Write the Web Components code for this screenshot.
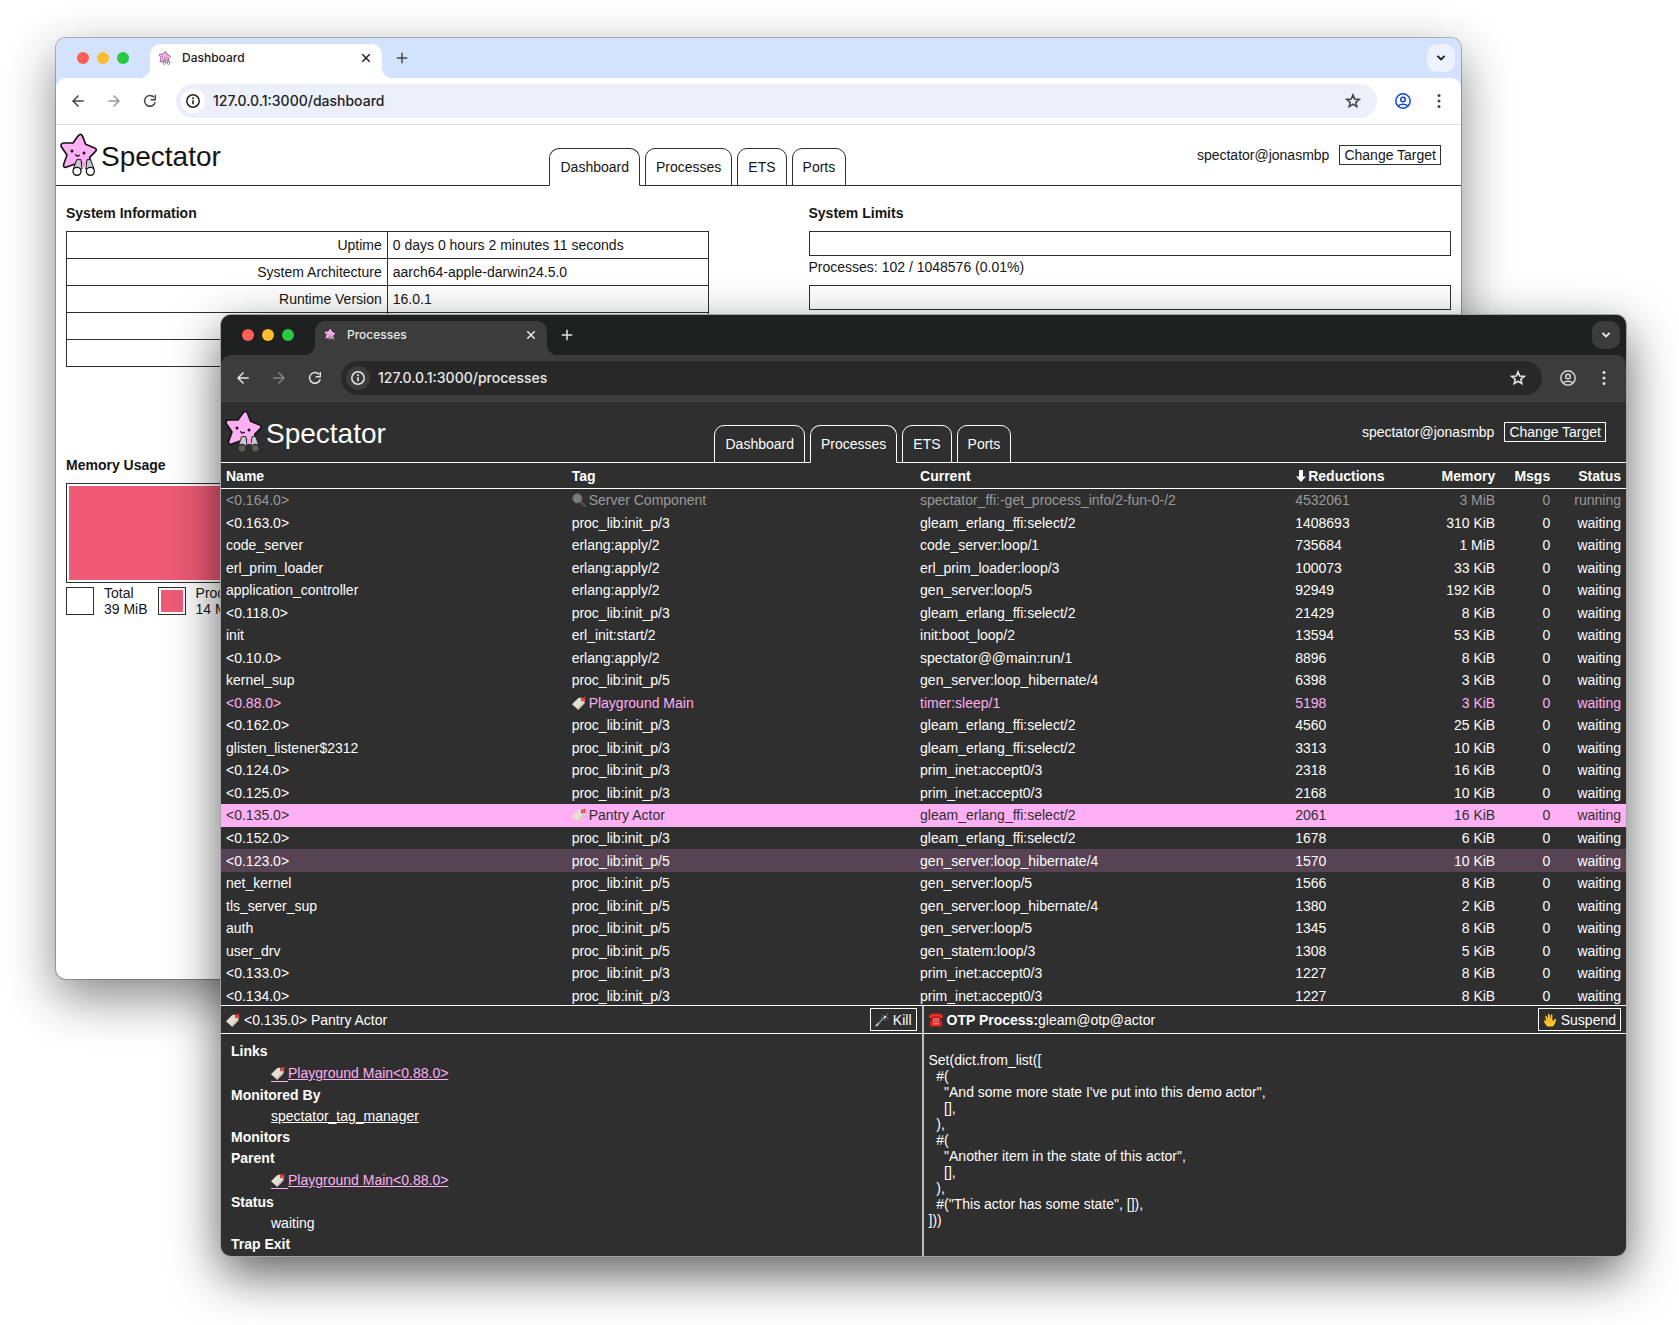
<!DOCTYPE html>
<html lang="en">
<head>
<meta charset="utf-8">
<title>Spectator</title>
<style>
  html, body { margin: 0; height: 100%; background: #fff; }
  body { font-family: "Liberation Sans", Arial, sans-serif; font-size: 14px; line-height: 16px; }
</style>
</head>
<body>
<desk-top>
  <browser-window theme="light" tab-title="Dashboard" url="127.0.0.1:3000/dashboard">
    <spectator-header current="Dashboard"></spectator-header>
    <dashboard-page></dashboard-page>
  </browser-window>
  <browser-window theme="dark" tab-title="Processes" url="127.0.0.1:3000/processes">
    <spectator-header current="Processes"></spectator-header>
    <process-table></process-table>
    <detail-split>
      <process-details slot="left"></process-details>
      <otp-details slot="right"></otp-details>
    </detail-split>
  </browser-window>
</desk-top>

<script>
const define = (name, html, setup) => {
  const template = document.createElement('template');
  template.innerHTML = html;
  customElements.define(name, class extends HTMLElement {
    connectedCallback() {
      if (this.shadowRoot) return;
      this.attachShadow({ mode: 'open' }).append(template.content.cloneNode(true));
      if (setup) setup(this, this.shadowRoot);
    }
  });
};

/* ---------- icons ---------- */
const line = (d, w = 1.6) => `<path d="${d}" fill="none" stroke="currentColor" stroke-width="${w}" stroke-linecap="square" stroke-linejoin="miter"/>`;
const ICONS = {
  back: ['0 0 16 16', line('M13 8H3.5M8 3L3 8l5 5', 1.5)],
  forward: ['0 0 16 16', line('M3 8h9.500M8 3l5 5-5 5', 1.5)],
  reload: ['0 0 16 16', `<path d="M13.200 9.200A5.400 5.400 0 1 1 12 4.300" fill="none" stroke="currentColor" stroke-width="1.5"/><path d="M13.300 2v4.700H8.600" fill="none" stroke="currentColor" stroke-width="1.5"/>`],
  info: ['0 0 16 16', `<circle cx="8" cy="8" r="6.200" fill="none" stroke="currentColor" stroke-width="1.5"/><path d="M8 7.200V11.300" stroke="currentColor" stroke-width="1.6"/><circle cx="8" cy="5.200" r="1" fill="currentColor"/>`],
  star: ['0 0 16 16', `<path d="M8 1.900L9.700 6l4.500.4-3.400 2.900 1 4.300L8 11.300l-3.800 2.300 1-4.300L1.800 6.400 6.300 6z" fill="none" stroke="currentColor" stroke-width="1.6"/>`],
  user: ['0 0 16 16', `<circle cx="8" cy="8" r="7.200" fill="none" stroke="currentColor" stroke-width="1.5"/><circle cx="8" cy="6.500" r="2.300" fill="none" stroke="currentColor" stroke-width="1.5"/><path d="M3.300 12.900C5.300 10.700 10.700 10.700 12.700 12.900" fill="none" stroke="currentColor" stroke-width="1.5"/>`],
  dots: ['0 0 16 16', `<g fill="currentColor"><circle cx="8" cy="2.500" r="1.500"/><circle cx="8" cy="8" r="1.500"/><circle cx="8" cy="13.500" r="1.500"/></g>`],
  close: ['0 0 16 16', line('M4.800 4.800l6.400 6.400M11.200 4.800l-6.400 6.400', 1.5)],
  plus: ['0 0 16 16', line('M8 3.500v9M3.500 8h9', 1.5)],
  chevron: ['0 0 16 16', line('M5 6.500l3 3 3-3', 1.8)],
  sort: ['0 0 10 14', `<path d="M3 1h4v6.500h3L5 13 0 7.500h3z" fill="currentColor"/>`],
  search: ['0 0 14 14', `<path d="M8.600 8.600L13 13" stroke="#555" stroke-width="2" stroke-linecap="round"/><circle cx="5.400" cy="5.400" r="4.600" fill="#7d7d7d" stroke="#686868"/>`],
  tag: ['0 0 14 14', `<path d="M8.300 1.500L12.800 4.200 12.400 7.400 6.200 13.800 0 8.300 6 2.300z" fill="#e6dfd4"/><path d="M12.400 7.400L6.200 13.800 5 12.700 11.500 5.900z" fill="#cfc6b8"/><circle cx="10" cy="4.300" r="1" fill="#6a2b25"/><path d="M9.700 4.600C9 2 10.500.8 11.300 2.600M10 4.400C12.500 5.400 14 3.600 11.800 3L13.300.800" fill="none" stroke="#ec3b34" stroke-width="1.200"/>`],
  wand: ['0 0 14 14', `<path d="M.8 13.200L3.800 10.200" stroke="#c3d0da" stroke-width="1.800"/><path d="M3.800 10.200L9.800 4.200" stroke="#7b838c" stroke-width="1.800"/><path d="M9.300 4.700L11 3" stroke="#dfe9f2" stroke-width="2"/><path d="M7.500 1.500l.5 1.500M12.500.500l-.5 1.500M13.500 5.500l-1.500-.5M6 4.500h1.500M10.500 7.500l-.5-1.500" stroke="#7b9bb8" stroke-width=".9"/>`],
  phone: ['0 0 14 14', `<path d="M.2 5V3C.5 1.200 3.500.500 7 .5s6.500.7 6.800 2.500V5H10.300V3.800H3.700V5z" fill="#f5281e"/><path d="M3.200 4.300h7.600L13.200 10v3.500H.8V10z" fill="#e01d17"/><g fill="#f7c9c4"><path d="M4.200 5.500h1.200v6H4.200zM6.400 5.500h1.200v6H6.400zM8.600 5.500h1.200v6H8.600z"/></g><path d="M3.500 7.500h7M3.500 9.500h7" stroke="#e01d17" stroke-width=".8"/>`],
  hand: ['0 0 14 14', `<path d="M4.500 13.500C2.800 12 1.200 9.500.8 7.500c.9-.8 1.800.1 2.400 1.300L2.300 3.200c.8-.9 1.500-.3 1.700.6L5 6.500 5 1.200c.7-.8 1.500-.4 1.600.4L7.200 6.200 8 1.500c.8-.7 1.500-.2 1.400.6L9.300 7 10.700 8c.4-1.500 1.300-2.500 2.500-2C12.300 8.500 12.500 11.500 9.500 13.500z" fill="#ffc62c"/><path d="M5 6.500v1.500M7.200 6.200v1.500M9.200 7v1M4.200 10c2-1.500 4-1.300 5.500.5" stroke="#d98b10" stroke-width=".6" fill="none"/>`],
  logo: ['0 0 114 132', `
    <path d="M62 4Q66 4 68 11L77 34 104 45Q113 49 106 56L89 73 93 96Q92 103 85 99L60 88 18 103Q9 104 11 94L21 66 4 41Q1 31 11 30L39 30 54 9Q58 4 62 4Z" fill="#ffaff3" stroke="#151515" stroke-width="5" stroke-linejoin="round"/>
    <circle cx="36" cy="54" r="4.500" fill="#151515"/><circle cx="72" cy="60" r="4.500" fill="#151515"/>
    <path d="M47 65Q52 73 58 67" fill="none" stroke="#151515" stroke-width="4" stroke-linecap="round"/>
    <g stroke="var(--lens-line)" stroke-width="3" stroke-linejoin="round"><path d="M50 80h13l3 28H40z" fill="#c9c9c9"/><path d="M81 80h11l10 28H77z" fill="#c9c9c9"/></g>
    <path d="M66 88h12v14H66z" fill="#f79be8"/>
    <circle cx="51" cy="115" r="12" fill="var(--lens)" stroke="var(--lens-line)" stroke-width="4"/><circle cx="91" cy="115" r="12" fill="var(--lens)" stroke="var(--lens-line)" stroke-width="4"/>`]
};
define('ui-icon', `<style>
  :host { display: inline-flex; width: 14px; height: 14px; flex: none; }
  svg { width: 100%; height: 100%; display: block; }
</style>`, (host, root) => {
  const [box, body] = ICONS[host.getAttribute('name')];
  root.append(document.createRange().createContextualFragment(`<svg viewBox="${box}" aria-hidden="true">${body}</svg>`));
});

/* ---------- free canvas holding the windows ---------- */
define('desk-top', `<style>
  :host { display: block; position: relative; height: 100vh; overflow: hidden; }
  ::slotted(browser-window) { position: absolute; inset: 38px 218px 346px 56px; }
  ::slotted(browser-window:last-of-type) { inset: 315px 53px 69px 221px; }
</style><slot></slot>`);

/* ---------- browser chrome ---------- */
define('browser-window', `<style>
  :host {
    --strip: #d3e3fd; --bar: #fff; --field: #ecf0fa; --chip: #fff; --rule: #dfe1e5; --menu: #ecf2fe;
    --ui: #1f2023; --ui-soft: #474747; --dim: #9b9b9b; --accent: #0b49c8; --page: #fff; --ink: #151515; --edge: #2f2f2f;
    --lens: #fff; --lens-line: #151515;
    display: flex; flex-direction: column; overflow: hidden; border-radius: 10px; background: var(--page); color: var(--ink);
    box-shadow: 0 0 0 1px rgba(0,0,0,.26), 0 18px 50px rgba(0,0,0,.48);
  }
  :host([theme="dark"]) {
    --strip: #1f2120; --bar: #3c3c3c; --field: #282828; --chip: #3c3c3c; --rule: #474747; --menu: #3c3c3c;
    --ui: #e9e9e9; --ui-soft: #e3e3e3; --dim: #858585; --accent: #d5d5d5; --page: #2f2f2f; --ink: #fefefe; --edge: #fefefe;
    --lens: #5e5d58; --lens-line: #2a2a2a;
    box-shadow: 0 0 0 1px #a4a4a4, 0 18px 50px rgba(0,0,0,.64);
  }
  * { box-sizing: border-box; }
  button { border: 0; padding: 0; background: none; color: inherit; font: inherit; display: grid; place-items: center; }
  .strip { display: flex; align-items: center; height: 40px; padding: 0 6px 0 21px; background: var(--strip); color: var(--ui-soft); flex: none; }
  .lights { display: flex; gap: 8px; margin-right: 21px; }
  .lights i { width: 12px; height: 12px; border-radius: 50%; background: #ff5f57; }
  .lights i + i { background: #febc2e; }
  .lights i + i + i { background: #28c840; }
  .tab { position: relative; align-self: end; display: flex; align-items: center; width: 232px; height: 34px; padding: 0 8px 6px; gap: 10px;
    border-radius: 10px 10px 0 0; background: var(--bar); color: var(--ui); font: 500 12px/16px Inter, sans-serif; }
  .tab span { flex: 1; }
  .tab::before, .tab::after { content: ""; position: absolute; bottom: 0; width: 10px; height: 10px; }
  .tab::before { right: 100%; background: radial-gradient(circle at 0 0, transparent 10px, var(--bar) 10px); }
  .tab::after { left: 100%; background: radial-gradient(circle at 100% 0, transparent 10px, var(--bar) 10px); }
  .tab ui-icon { width: 14px; height: 14px; }
  .tab button ui-icon { width: 16px; height: 16px; }
  .new { margin: 0 auto 0 12px; }
  .new ui-icon, .menu ui-icon { width: 16px; height: 16px; }
  .menu { width: 28px; height: 28px; border-radius: 10px; background: var(--menu); color: var(--ui); }
  .under { background: var(--strip); flex: none; }
  .bar { display: flex; align-items: center; padding: 6px 14px; gap: 20px; background: var(--bar); border-radius: 10px 10px 0 0; border-bottom: 1px solid var(--rule); color: var(--ui-soft); }
  .bar ui-icon { width: 16px; height: 16px; }
  .bar > .fwd { color: var(--dim); }
  .field { flex: 1; display: flex; align-items: center; gap: 8px; height: 34px; margin: 0 -2px; padding: 0 16px 0 5px; border-radius: 17px; background: var(--field); }
  .field .chip { width: 24px; height: 24px; border-radius: 50%; background: var(--chip); color: var(--ui); }
  input { flex: 1; min-width: 0; border: 0; padding: 0; background: none; color: var(--ui); font: 500 14px/20px Inter, sans-serif; }
  .user { color: var(--accent); }
  main { flex: 1; min-height: 0; display: flex; flex-direction: column; }
</style>
<div class="strip">
  <div class="lights"><i></i><i></i><i></i></div>
  <div class="tab"><ui-icon name="logo"></ui-icon><span></span><button aria-label="Close tab"><ui-icon name="close"></ui-icon></button></div>
  <button class="new" aria-label="New tab"><ui-icon name="plus"></ui-icon></button>
  <button class="menu" aria-label="Search tabs"><ui-icon name="chevron"></ui-icon></button>
</div>
<div class="under"><div class="bar">
  <button aria-label="Back"><ui-icon name="back"></ui-icon></button>
  <button class="fwd" aria-label="Forward"><ui-icon name="forward"></ui-icon></button>
  <button aria-label="Reload"><ui-icon name="reload"></ui-icon></button>
  <div class="field"><button class="chip" aria-label="Site information"><ui-icon name="info"></ui-icon></button><input type="text" aria-label="Address"><button aria-label="Bookmark"><ui-icon name="star"></ui-icon></button></div>
  <button class="user" aria-label="Profile"><ui-icon name="user"></ui-icon></button>
  <button aria-label="More"><ui-icon name="dots"></ui-icon></button>
</div></div>
<main><slot></slot></main>`, (host, root) => {
  root.querySelector('.tab span').textContent = host.getAttribute('tab-title');
  root.querySelector('input').setAttribute('value', host.getAttribute('url'));
});

/* ---------- application header ---------- */
define('spectator-header', `<style>
  :host { display: flex; justify-content: space-between; align-items: center; height: 60px; flex: none; padding: 0 20px 0 4px; border-bottom: 1px solid var(--edge); }
  .brand { display: flex; align-items: end; gap: 3px; font-size: 28px; line-height: 40px; }
  .brand ui-icon { width: 38px; height: 44px; }
  nav { display: flex; align-self: end; gap: 5px; margin-bottom: -1px; }
  a { box-sizing: border-box; height: 38px; padding: 10px 10px 0; border: 1px solid var(--edge); border-radius: 10px 10px 0 0; color: inherit; text-decoration: none; }
  a[aria-current] { border-bottom-color: var(--page); }
  .target { display: flex; align-items: center; gap: 10px; padding-left: 22px; }
  button { font: inherit; color: inherit; background: none; border: 1px solid var(--edge); padding: 1px 4px; }
</style>
<div class="brand"><ui-icon name="logo"></ui-icon><span>Spectator</span></div>
<nav><a href="#dashboard">Dashboard</a><a href="#processes">Processes</a><a href="#ets">ETS</a><a href="#ports">Ports</a></nav>
<div class="target"><span>spectator@jonasmbp</span><button>Change Target</button></div>`, (host, root) => {
  for (const a of root.querySelectorAll('a'))
    if (a.textContent === host.getAttribute('current')) a.setAttribute('aria-current', 'page');
});

/* ---------- dashboard ---------- */
define('limit-bar', `<style>
  :host { display: block; }
  .track { box-sizing: border-box; height: 25px; border: 1px solid var(--edge); }
  .label { height: 29px; line-height: 22px; }
</style><div class="track"></div><div class="label"><slot></slot></div>`);

define('legend-item', `<style>
  :host { display: flex; align-items: center; gap: 10px; }
  i { box-sizing: border-box; width: 28px; height: 28px; padding: 2px; border: 1px solid var(--edge); background: var(--swatch, #fff) content-box; }
</style><i></i><div><slot></slot></div>`);

define('dashboard-page', `<style>
  :host { display: block; padding: 19px 10px 0; }
  .cols { display: grid; grid-template-columns: 1fr 1fr; gap: 100px; }
  h2 { margin: 0 0 10px; font-size: 14px; line-height: 16px; }
  table { width: 100%; border-collapse: collapse; table-layout: fixed; }
  th, td { height: 26px; padding: 0 5px; border: 1px solid var(--edge); font-weight: 400; text-align: left; }
  th { text-align: right; }
  .memory { margin-top: 90px; }
  .graph { box-sizing: border-box; height: 100px; padding: 2px; border: 1px solid var(--edge); display: flex; margin-bottom: 2px; }
  .graph i { width: 36%; background: #ef5b76; }
  .legend { display: flex; gap: 10px; }
  .proc { --swatch: #ef5b76; }
</style>
<div class="cols">
  <section><h2>System Information</h2>
    <table>
      <tr><th scope="row">Uptime</th><td>0 days 0 hours 2 minutes 11 seconds</td></tr>
      <tr><th scope="row">System Architecture</th><td>aarch64-apple-darwin24.5.0</td></tr>
      <tr><th scope="row">Runtime Version</th><td>16.0.1</td></tr>
      <tr><th scope="row"></th><td></td></tr>
      <tr><th scope="row"></th><td></td></tr>
    </table>
  </section>
  <section><h2>System Limits</h2>
    <limit-bar>Processes: 102 / 1048576 (0.01%)</limit-bar>
    <limit-bar></limit-bar>
  </section>
</div>
<section class="memory"><h2>Memory Usage</h2>
  <div class="graph"><i></i></div>
  <div class="legend"><legend-item>Total<br>39 MiB</legend-item><legend-item class="proc">Processes<br>14 MiB</legend-item></div>
</section>`);

/* ---------- process list ---------- */
const ROWS = [
  ['<0.164.0>', 'Server Component', 'spectator_ffi:-get_process_info/2-fun-0-/2', '4532061', '3 MiB', 'running', 'muted', 'search'],
  ['<0.163.0>', 'proc_lib:init_p/3', 'gleam_erlang_ffi:select/2', '1408693', '310 KiB'],
  ['code_server', 'erlang:apply/2', 'code_server:loop/1', '735684', '1 MiB'],
  ['erl_prim_loader', 'erlang:apply/2', 'erl_prim_loader:loop/3', '100073', '33 KiB'],
  ['application_controller', 'erlang:apply/2', 'gen_server:loop/5', '92949', '192 KiB'],
  ['<0.118.0>', 'proc_lib:init_p/3', 'gleam_erlang_ffi:select/2', '21429', '8 KiB'],
  ['init', 'erl_init:start/2', 'init:boot_loop/2', '13594', '53 KiB'],
  ['<0.10.0>', 'erlang:apply/2', 'spectator@@main:run/1', '8896', '8 KiB'],
  ['kernel_sup', 'proc_lib:init_p/5', 'gen_server:loop_hibernate/4', '6398', '3 KiB'],
  ['<0.88.0>', 'Playground Main', 'timer:sleep/1', '5198', '3 KiB', 'waiting', 'tagged', 'tag'],
  ['<0.162.0>', 'proc_lib:init_p/3', 'gleam_erlang_ffi:select/2', '4560', '25 KiB'],
  ['glisten_listener$2312', 'proc_lib:init_p/3', 'gleam_erlang_ffi:select/2', '3313', '10 KiB'],
  ['<0.124.0>', 'proc_lib:init_p/3', 'prim_inet:accept0/3', '2318', '16 KiB'],
  ['<0.125.0>', 'proc_lib:init_p/3', 'prim_inet:accept0/3', '2168', '10 KiB'],
  ['<0.135.0>', 'Pantry Actor', 'gleam_erlang_ffi:select/2', '2061', '16 KiB', 'waiting', 'selected', 'tag'],
  ['<0.152.0>', 'proc_lib:init_p/3', 'gleam_erlang_ffi:select/2', '1678', '6 KiB'],
  ['<0.123.0>', 'proc_lib:init_p/5', 'gen_server:loop_hibernate/4', '1570', '10 KiB', 'waiting', 'hovered'],
  ['net_kernel', 'proc_lib:init_p/5', 'gen_server:loop/5', '1566', '8 KiB'],
  ['tls_server_sup', 'proc_lib:init_p/5', 'gen_server:loop_hibernate/4', '1380', '2 KiB'],
  ['auth', 'proc_lib:init_p/5', 'gen_server:loop/5', '1345', '8 KiB'],
  ['user_drv', 'proc_lib:init_p/5', 'gen_statem:loop/3', '1308', '5 KiB'],
  ['<0.133.0>', 'proc_lib:init_p/3', 'prim_inet:accept0/3', '1227', '8 KiB'],
  ['<0.134.0>', 'proc_lib:init_p/3', 'prim_inet:accept0/3', '1227', '8 KiB']
];
define('process-table', `<style>
  :host { display: block; flex: 1; min-height: 0; overflow: hidden; }
  table { width: 100%; height: 544px; border-collapse: separate; border-spacing: 0; table-layout: fixed; }
  .name { width: 24.6%; } .tag { width: 24.8%; } .cur { width: 26.7%; } .red { width: 120px; } .mem { width: 90px; } .msg { width: 55px; }
  th, td { padding: 0 5px; text-align: left; white-space: nowrap; }
  th { height: 25px; border-bottom: 1px solid var(--edge); }
  th:nth-child(n+5), td:nth-child(n+5) { text-align: right; }
  th span, td span { display: inline-flex; align-items: center; gap: 3px; vertical-align: top; }
  th ui-icon { width: 12px; height: 14px; }
  th span { gap: 1px; }
  .muted { color: #999; }
  .tagged { color: #ffaff3; }
  .selected { background: #ffaff3; color: #2f2f2f; }
  .hovered { background: #584355; }
</style>
<table>
  <colgroup><col class="name"><col class="tag"><col class="cur"><col class="red"><col class="mem"><col class="msg"><col></colgroup>
  <thead><tr><th>Name</th><th>Tag</th><th>Current</th><th aria-sort="descending"><span><ui-icon name="sort"></ui-icon>Reductions</span></th><th>Memory</th><th>Msgs</th><th>Status</th></tr></thead>
  <tbody></tbody>
</table>`, (host, root) => {
  const body = root.querySelector('tbody');
  for (const [name, tag, current, reductions, memory, status = 'waiting', kind, icon] of ROWS) {
    const tr = body.insertRow();
    if (kind) tr.className = kind;
    for (const text of [name, tag, current, reductions, memory, '0', status]) tr.insertCell().textContent = text;
    if (icon) {
      const span = document.createElement('span');
      const glyph = document.createElement('ui-icon');
      glyph.setAttribute('name', icon);
      span.append(glyph, tag);
      tr.cells[1].replaceChildren(span);
    }
  }
});

/* ---------- details ---------- */
define('detail-split', `<style>
  :host { display: grid; grid-template-columns: calc(50% - 2px) 1fr; height: 250px; flex: none; border-top: 1px solid var(--edge); }
  div { min-width: 0; overflow: hidden; }
  div + div { border-left: 2px solid #bdbdbd; }
</style><div><slot name="left"></slot></div><div><slot name="right"></slot></div>`);

define('panel-bar', `<style>
  :host { display: flex; align-items: center; gap: 4px; height: 27px; padding: 0 5px; border-bottom: 1px solid var(--edge); }
  .title { flex: 1; }
  button { display: flex; align-items: center; gap: 4px; height: 23px; padding: 0 4px; font: inherit; color: inherit; background: none; border: 1px solid var(--edge); }
</style><i class="glyph"></i><span class="title"><slot></slot></span><button><i class="glyph"></i><span></span></button>`, (host, root) => {
  const names = [host.getAttribute('icon'), host.getAttribute('action-icon')];
  root.querySelectorAll('.glyph').forEach((place, i) => {
    const glyph = document.createElement('ui-icon');
    glyph.setAttribute('name', names[i]);
    place.replaceWith(glyph);
  });
  root.querySelector('button span').textContent = host.getAttribute('action');
});

define('process-details', `<style>
  :host { display: block; }
  dl { margin: 0; padding: 7px 10px 0; line-height: 21px; }
  dt { font-weight: 700; }
  dd { margin: 0 0 0 40px; }
  a { color: inherit; }
  .tagged { line-height: 23px; color: #ffaff3; }
  .tagged a { display: inline-flex; align-items: center; vertical-align: top; }
  .tagged ui-icon { padding: 0 3px 1px 0; border-bottom: 1px solid; }
</style>
<panel-bar icon="tag" action-icon="wand" action="Kill">&lt;0.135.0&gt; Pantry Actor</panel-bar>
<dl>
  <dt>Links</dt><dd class="tagged"><a href="#0.88.0"><ui-icon name="tag"></ui-icon>Playground Main&lt;0.88.0&gt;</a></dd>
  <dt>Monitored By</dt><dd><a href="#spectator_tag_manager">spectator_tag_manager</a></dd>
  <dt>Monitors</dt>
  <dt>Parent</dt><dd class="tagged"><a href="#0.88.0"><ui-icon name="tag"></ui-icon>Playground Main&lt;0.88.0&gt;</a></dd>
  <dt>Status</dt><dd>waiting</dd>
  <dt>Trap Exit</dt>
</dl>`);

define('otp-details', `<style>
  :host { display: block; }
  pre { margin: 0; padding: 18px 5px; font: inherit; }
</style>
<panel-bar icon="phone" action-icon="hand" action="Suspend"><b>OTP Process:</b>gleam@otp@actor</panel-bar>
<pre>Set(dict.from_list([
  #(
    "And some more state I've put into this demo actor",
    [],
  ),
  #(
    "Another item in the state of this actor",
    [],
  ),
  #("This actor has some state", []),
]))</pre>`);
</script>
</body>
</html>
